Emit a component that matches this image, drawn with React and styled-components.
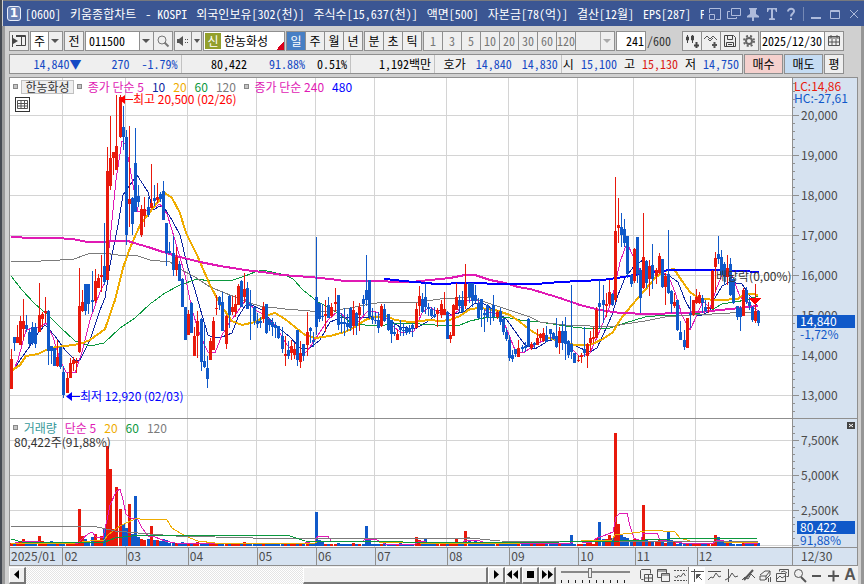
import React from "react";
import styled, { createGlobalStyle, css } from "styled-components";

const MONO = '"Noto Sans Mono CJK KR", "Noto Sans CJK KR", "Liberation Mono", monospace';
const SANS = '"Noto Sans CJK KR", "Liberation Sans", sans-serif';

const C = {
  title: "#3b5693",
  edge: "#8f8f8f",
  panel: "#d0d0d0",
  face: "#efefef",
  axis: "#d6e2f0",
  grid: "#d4d4d4",
  up: "#e8190c",
  down: "#1059c9",
  magenta: "#e01ab4",
  navy: "#0d25a0",
  amber: "#efac00",
  green: "#0b983e",
  gray: "#7b7b7b",
  blue: "#0000ff",
  text: "#4b4b4b",
  quote: "#1449c4",
};

/* x, high, body top, body bottom, low, colour (u = up, d = down) */
const CANDLES = `
11 349 359 389 389 u;14 337 337 343 351 d;17 325 337 343 343 u;20 316 321 345 345 u;23 299 321 329 340 u;26 315 325 329 332 d;29 330 332 344 346 d;32 322 327 343 345 d;35 323 327 344 348 d;39 283 315 332 332 u;42 312 314 319 327 u;45 297 311 313 323 u;48 310 311 351 365 d;51 346 346 351 364 d;54 348 348 366 366 d;57 340 357 366 367 u;60 347 347 367 369 d;63 366 372 395 398 d;67 373 378 393 393 u;70 358 363 378 378 u;73 357 360 364 371 u;76 358 361 363 373 u;79 268 306 352 353 u;82 290 302 311 312 u;85 284 284 311 315 d;88 284 284 304 314 d;92 271 300 302 312 d;95 269 281 301 303 u;98 274 278 288 288 u;101 255 275 277 292 u;104 223 266 282 285 d;107 147 171 280 280 u;110 116 158 186 190 u;113 152 152 158 175 u;116 95 146 170 170 u;120 95 97 137 138 u;123 106 127 137 150 d;126 130 137 235 245 d;129 126 199 204 227 u;132 197 198 224 235 d;135 128 163 212 212 d;138 185 196 202 207 d;141 205 209 235 237 u;144 197 209 216 227 u;148 197 207 215 217 d;151 164 203 208 208 u;154 185 198 201 206 d;157 183 197 200 203 u;160 192 194 199 202 d;163 181 191 220 220 d;166 223 223 253 266 d;169 242 251 253 254 d;173 236 253 270 276 d;176 247 257 270 276 u;179 261 264 281 281 d;182 278 279 307 307 d;185 307 307 340 340 d;188 310 314 335 335 u;191 302 303 333 333 d;194 327 336 356 356 u;197 311 321 336 358 u;201 318 319 362 371 d;204 323 361 367 368 d;207 356 368 379 388 d;210 338 341 360 360 u;213 317 321 350 350 u;216 295 308 309 315 u;219 296 297 305 310 d;222 292 302 331 331 d;226 315 316 344 349 u;229 295 296 315 328 d;232 296 307 312 315 u;235 295 304 312 317 u;238 284 286 305 305 u;241 280 281 307 307 d;244 273 289 297 303 u;247 282 288 309 309 d;250 290 304 306 340 d;254 307 307 321 325 d;257 313 321 324 328 d;260 317 321 323 328 d;263 302 307 319 323 u;266 304 304 333 334 d;269 318 319 325 331 d;272 318 322 327 336 d;275 322 325 328 338 d;278 326 326 338 339 d;282 327 336 349 353 d;285 336 354 356 366 u;288 341 350 356 359 d;291 340 346 353 360 u;294 343 349 355 359 u;297 330 330 360 366 d;300 341 353 362 368 u;303 344 344 356 361 d;307 312 332 345 356 u;310 327 328 331 343 d;313 332 340 342 347 d;316 237 297 327 335 d;319 303 303 319 322 d;322 304 316 317 321 d;325 300 314 316 332 u;328 297 305 318 318 d;331 303 307 316 317 u;335 288 302 304 312 u;338 295 295 325 330 d;341 313 322 324 333 d;344 308 322 324 336 d;347 314 323 327 331 d;350 307 308 328 331 d;353 301 310 326 335 u;356 312 313 326 335 d;359 303 307 315 331 u;363 295 299 304 315 d;366 255 290 300 306 d;369 280 280 317 319 d;372 308 317 320 324 d;375 312 320 321 324 d;378 312 320 328 333 d;381 304 306 326 327 u;384 304 309 321 322 d;388 314 314 330 331 d;391 320 320 334 343 d;394 323 332 334 336 d;397 330 334 340 340 u;400 320 327 330 336 d;403 323 330 331 336 d;406 326 328 333 335 d;409 325 328 332 334 d;412 323 325 329 337 d;416 303 309 328 328 u;419 286 296 306 316 u;422 293 299 312 313 d;425 283 297 307 314 d;428 303 307 309 316 d;431 307 309 316 317 d;434 307 315 317 318 d;437 308 310 314 327 u;441 300 304 315 318 u;444 292 309 315 315 u;447 311 312 339 339 d;450 332 335 339 343 u;453 304 305 336 336 u;456 283 297 310 310 u;459 295 300 306 312 d;462 291 300 312 313 d;465 264 284 306 309 u;469 283 283 297 303 d;472 283 283 301 307 d;475 285 295 301 303 d;478 298 303 318 319 d;481 299 299 310 327 d;484 309 313 315 332 d;487 304 305 317 322 d;490 307 317 318 325 d;493 295 305 317 321 d;497 310 312 317 319 u;500 308 311 322 325 d;503 318 319 332 335 d;506 328 332 339 341 d;509 335 340 358 361 d;512 350 355 359 362 d;515 349 349 354 357 d;518 340 348 357 357 u;522 345 347 349 352 d;525 342 346 348 352 d;528 318 319 346 347 d;531 342 344 348 350 u;534 342 343 345 348 d;537 329 338 345 345 u;540 333 334 338 341 u;543 328 333 341 342 u;546 326 335 342 342 d;550 329 329 334 340 d;553 332 333 339 340 d;556 318 336 347 348 d;559 327 331 343 354 u;562 321 331 343 350 d;565 317 331 344 360 d;568 340 341 355 358 d;571 285 344 352 359 d;574 353 353 363 363 d;578 355 360 361 362 u;581 353 355 357 363 u;584 327 349 353 357 d;587 343 344 356 368 u;590 331 338 343 351 u;593 327 337 339 343 u;596 307 310 338 338 u;599 280 303 307 328 d;603 285 300 305 323 d;606 293 304 306 317 u;609 280 292 304 306 u;612 293 294 305 306 d;615 177 231 300 302 u;618 198 225 228 243 u;621 213 227 235 247 d;624 219 229 243 247 d;627 236 236 274 278 d;631 274 275 284 287 d;634 248 249 281 283 u;637 237 237 274 283 d;640 268 270 298 313 d;643 213 257 288 289 u;646 260 261 283 288 d;649 260 266 279 296 u;652 244 265 279 289 d;656 268 270 276 284 u;659 253 256 273 274 u;662 259 259 287 288 d;665 273 276 287 305 u;668 230 274 293 294 d;671 290 291 304 313 d;674 293 302 306 308 u;677 300 300 330 331 d;680 321 332 340 340 d;684 330 340 347 350 d;687 318 318 348 348 u;690 296 313 315 328 d;693 300 300 315 316 u;696 289 297 303 304 u;699 292 295 303 304 u;702 295 298 303 313 d;705 300 307 311 312 d;708 302 307 309 313 u;712 270 271 309 309 u;715 252 258 267 292 u;718 236 254 259 264 d;721 250 257 275 276 d;724 262 264 277 285 d;727 255 268 277 285 u;730 258 264 295 296 d;733 278 279 303 304 d;737 306 306 317 320 d;740 306 308 317 331 d;743 288 290 316 316 u;746 287 290 302 304 d;749 297 302 306 310 d;752 306 307 320 322 d;755 284 311 321 323 u;758 310 311 323 326 d`
  .trim()
  .split(";")
  .map((row) => {
    const [x, hi, top, bot, lo, dir] = row.trim().split(" ");
    return { x: +x, hi: +hi, top: +top, bot: +bot, lo: +lo, up: dir === "u" };
  });

/* bar heights on the busier days; the quiet ones get a low base value */
const VOLUME = {
  17: 4, 20: 5, 23: 7, 39: 10, 42: 5, 51: 5, 79: 37, 82: 10, 85: 7, 88: 5, 92: 9, 95: 12, 98: 6, 101: 10, 104: 18,
  107: 100, 110: 77, 113: 17, 116: 59, 120: 37, 123: 22, 126: 18, 129: 42, 132: 12, 135: 50, 138: 9, 141: 7, 144: 6,
  148: 7, 151: 20, 154: 6, 157: 6, 160: 5, 163: 7, 166: 6, 169: 3, 173: 4, 176: 3, 182: 4, 197: 4, 244: 4, 307: 5,
  316: 34, 319: 6, 322: 5, 366: 20, 369: 6, 416: 9, 419: 6, 425: 7, 456: 7, 465: 15, 469: 5, 475: 5, 546: 4, 571: 11,
  590: 5, 596: 8, 599: 24, 603: 7, 606: 7, 609: 11, 612: 8, 615: 113, 618: 22, 621: 11, 624: 9, 627: 8, 631: 5, 634: 7,
  637: 6, 640: 6, 643: 41, 646: 7, 649: 4, 652: 5, 656: 4, 659: 6, 662: 5, 668: 15, 671: 6, 674: 4, 715: 11, 718: 9,
  721: 5, 724: 5, 727: 4, 730: 6,
};
const volumeOf = (x, i) => VOLUME[x] || 2 + ((i * 7) % 5 === 0 ? 1 : 0);

const PRICE_MA = [
  { color: C.green, width: 1, pts: "11,276 22,290 35,304 48,315 60,327 75,341 90,346 104,343 120,328 135,318 150,304 165,293 180,285 197,279 210,281 233,280 245,276 255,272 263,270 285,275 293,279 303,290 318,302 330,308 340,315 350,322 365,325 385,325 395,323 420,324 435,325 460,325 470,321 488,317 505,317 520,320 540,322 565,326 590,329 610,328 625,323 645,317 665,315 690,315 710,311 722,304 735,302 746,300 758,296" },
  { color: C.gray, width: 1, pts: "11,261 32,262 50,260 60,260 74,259 88,254 103,253 118,255 135,255 150,260 170,262 180,269 195,277 210,287 230,295 250,303 260,306 285,309 310,311 330,311 350,308 370,304 385,302 420,302 440,299 470,297 485,302 500,307 515,312 530,317 540,322 565,325 590,326 610,327 625,324 645,321 665,317 690,315 712,314 730,313 745,312 758,312" },
  { color: C.amber, width: 2, pts: "11,371 20,365 26,356 38,354 50,348 65,346 80,344 90,340 105,329 115,300 123,268 130,248 140,225 150,212 165,193 172,198 180,213 186,233 197,255 210,285 220,304 232,321 242,325 255,322 268,315 275,313 285,319 295,327 305,335 315,338 330,336 345,332 355,327 365,320 375,317 387,316 395,320 410,322 430,320 440,321 450,320 460,316 470,309 480,308 495,310 510,315 520,322 530,330 540,336 548,338 560,341 575,345 590,345 603,339 613,332 620,320 632,305 645,290 655,278 664,271 674,269 682,281 690,292 700,299 720,300 738,299 745,293 758,295" },
  { color: C.magenta, width: 2, pts: "11,237 33,238 55,238 72,239 88,242 105,242 115,241 128,241 134,243 148,247 163,252 180,257 200,262 220,266 245,270 270,273 282,275 310,277 330,279 345,281 380,281 395,282 412,282 430,280 450,278 465,275 475,275 490,280 505,283 518,287 530,289 540,292 560,298 580,305 600,310 620,313 650,314 680,313 700,312 720,310 740,308 758,306" },
  { color: C.blue, width: 2, pts: "384,279 395,280 403,281 415,282 437,284 466,283 507,284 537,284 548,283 560,282 580,281 603,280 623,277 640,274 660,271 673,270 713,270 740,271 759,272" },
];
const FAST_MA = [
  { color: C.navy, width: 1, pts: "14,370 20,360 30,346 38,333 45,325 55,336 65,350 75,360 80,360 90,340 100,310 105,298 110,265 118,225 123,195 130,185 137,175 148,192 153,210 160,206 165,209 172,220 180,235 188,268 195,290 202,315 208,335 215,338 222,337 232,333 238,317 245,306 252,305 262,310 275,325 290,337 300,348 310,348 320,340 330,322 340,318 355,317 365,318 375,316 388,319 400,327 415,329 430,320 440,310 452,315 465,311 475,303 482,303 495,310 507,320 517,334 525,345 535,349 548,341 560,338 570,343 580,348 590,352 597,348 603,335 612,315 618,295 625,278 635,265 643,260 650,268 660,273 668,275 678,282 685,300 692,313 700,316 710,311 715,298 722,286 730,282 742,284 748,293 758,307" },
  { color: C.magenta, width: 1, pts: "11,376 18,360 26,330 33,328 40,327 46,323 53,337 60,360 66,372 75,373 82,352 90,320 100,292 105,282 110,240 116,180 122,141 126,145 130,168 138,212 150,210 160,204 167,214 175,240 185,275 192,310 200,335 208,352 215,353 222,335 230,322 238,311 246,299 255,310 265,315 275,325 287,345 300,358 308,350 318,335 328,320 338,311 348,320 358,322 368,311 376,312 386,318 395,328 402,333 414,331 422,313 430,307 440,313 450,316 458,311 466,300 477,300 487,312 497,314 505,325 515,350 523,353 535,345 548,338 560,337 572,349 580,357 590,353 598,335 605,318 612,300 620,262 627,243 633,256 640,270 650,270 660,272 668,275 675,292 682,315 690,330 697,315 703,301 710,308 716,290 723,272 732,275 740,297 748,303 758,311" },
];
const VOLUME_MA = [
  { color: C.magenta, pts: "11,544 23,541 40,542 60,543 77,544 81,540 88,534 92,532 96,537 103,538 107,520 110,505 116,492 120,489 123,500 126,514 129,517 133,519 137,518 142,528 148,536 155,537 165,541 175,543 300,544 315,541 318,536 328,536 331,541 362,542 365,539 377,540 385,544 415,544 420,541 432,543 462,543 466,540 478,540 485,543 570,544 574,541 590,543 597,538 603,536 613,532 616,517 620,513 627,513 630,526 634,538 641,541 643,533 657,533 660,540 682,543 712,544 718,540 730,542 758,544" },
  { color: C.amber, pts: "11,543 75,543 90,541 104,540 108,535 120,526 137,518 143,520 152,519 167,520 172,528 185,536 198,541 215,543 315,543 318,541 370,541 378,542 420,543 460,543 520,543 612,540 615,535 640,532 650,530 675,532 680,538 690,541 758,543" },
  { color: C.gray, pts: "11,526 93,526 115,531 150,534 175,536 215,537 290,539 470,538 500,541 620,542 758,541" },
  { color: C.green, pts: "11,539 22,542 105,542 115,538 140,535 265,535 290,536 305,541 500,543 620,541 670,539 758,538" },
];
const MONTHS = [
  ["2025/01", 53], ["02", 63], ["03", 62], ["04", 69], ["05", 59], ["06", 59],
  ["07", 72], ["08", 62], ["09", 69], ["10", 56], ["11", 62], ["12", 96],
];
const MONTH_X = [62, 125, 187, 256, 315, 374, 446, 508, 577, 633, 695];
const TITLE_PARTS = [
  "[0600] ", "키움종합차트 ", "- KOSPI ", "외국인보유[302(천)] ", "주식수[15,637(천)] ",
  "액면[500] ", "자본금[78(억)] ", "결산[12월] ", "EPS[287] ", "PE",
];

const Global = createGlobalStyle`
  *, *::before, *::after { box-sizing: border-box; }
  body { margin: 0; background: ${C.panel}; }
  button, input, select { font: inherit; color: inherit; margin: 0; padding: 0; border-radius: 0; }
`;

const Frame = styled.div`
  min-height: 100vh;
  display: flex;
  flex-direction: column;
  background: ${C.panel};
  border-left: 2px solid #454a52;
  font: 12px/16px ${MONO};
  color: #000;
`;
const TitleBar = styled.header`
  display: flex;
  align-items: center;
  height: 26px;
  margin-left: 1px;
  padding: 0 2px 0 4px;
  border-top: 1px solid #77797e;
  background: ${C.title};
  color: #fff;
`;
const Badge = styled.span`
  width: 14px;
  height: 15px;
  flex: none;
  border: 1px solid #e8edf8;
  border-radius: 3px;
  background: #6c83b6;
  font: bold 12px/13px "DejaVu Sans", sans-serif;
  text-align: center;
`;
const Title = styled.h1`
  flex: 1;
  min-width: 0;
  display: flex;
  gap: 3px;
  height: 18px;
  margin: 0 2px 0 4px;
  font: inherit;
  line-height: 18px;
  white-space: pre;
  overflow: hidden;
`;
const TitleTools = styled.div`
  display: flex;
  align-items: center;
  color: #aebbdc;
  gap: 2px;
`;
const TitleButton = styled.button`
  width: 17px;
  height: 16px;
  display: grid;
  place-items: center;
  border: 0;
  background: none;
`;
const Divider = styled.span`
  width: 1px;
  height: 14px;
  margin: 0 1px 0 2px;
  background: #7589b5;
`;
const Body = styled.main`
  flex: 1;
  display: flex;
  flex-direction: column;
  padding: 5px 3px 0 4px;
  border-left: 3px solid #9a9a9a;
  border-right: 3px solid #969696;
`;
const Toolbar = styled.div`
  display: flex;
  align-items: stretch;
  height: 20px;
  gap: 1px;
  margin-right: 14px;
`;
const Group = styled.div`
  display: flex;
  border: 1px solid ${C.edge};
  background: ${C.face};
  ${(p) => p.$push && css`margin-left: auto;`}
  && > * + * { border-left: 1px solid ${C.edge}; }
`;
const Tool = styled.button`
  box-sizing: content-box;
  width: ${(p) => p.$w || 18}px;
  flex: none;
  display: flex;
  align-items: center;
  justify-content: center;
  border: 0;
  background: ${(p) => (p.$on ? "#477fc4" : C.face)};
  color: ${(p) => (p.$on ? "#fff" : p.$dim ? "#777" : "#000")};
`;
const Select = styled.select`
  width: ${(p) => p.$w}px;
  padding: 0 0 0 3px;
  line-height: 18px;
  appearance: none;
  border: 0;
  background:
    linear-gradient(90deg, transparent calc(100% - 14px), ${C.edge} 0 calc(100% - 13px), ${C.face} 0),
    ${(p) => (p.disabled ? "#eee" : "#fff")};
`;
const SelectWrap = styled.label`
  position: relative;
  display: flex;
  &::after {
    content: "";
    position: absolute;
    right: 3px;
    top: 7px;
    border: 4px solid transparent;
    border-bottom: 0;
    border-top-color: ${(p) => (p.$dim ? "#aaa" : "#555")};
    pointer-events: none;
  }
`;
const Field = styled.input`
  width: ${(p) => p.$w}px;
  border: 0;
  padding: 0 1px;
  outline: 0;
  background: #fff;
  text-align: ${(p) => (p.$right ? "right" : "left")};
`;
const StockName = styled.div`
  width: 80px;
  display: flex;
  align-items: center;
  gap: 3px;
  padding-left: 1px;
  white-space: nowrap;
  background: linear-gradient(135deg, transparent 0 50%, #d9001b 50%) right bottom / 8px 8px no-repeat #fff;
`;
const NewMark = styled.span`
  width: 16px;
  line-height: 16px;
  text-align: center;
  background: #93a02c;
  color: #fff;
`;
const Total = styled.span`
  line-height: 20px;
  color: #333;
`;
const QuoteBar = styled.div`
  display: flex;
  height: 20px;
  gap: 1px;
  margin: 3px 14px 3px 0;
`;
const Quotes = styled.div`
  flex: 1;
  display: flex;
  border: 1px solid ${C.edge};
  background: ${C.face};
`;
const QuoteCell = styled.div`
  flex: ${(p) => p.$w} 1 0;
  min-width: 0;
  display: flex;
  align-items: center;
  justify-content: flex-end;
  gap: ${(p) => p.$gap || 12}px;
  padding-right: 3px;
  white-space: nowrap;
  & + & { border-left: 1px solid #c2c2c2; }
`;
const Num = styled.span`
  margin-right: ${(p) => p.$after || 0}px;
  color: ${(p) => ({ up: "#d9190f", down: C.quote }[p.$tone] || "#000")};
`;
const Order = styled.button`
  width: ${(p) => p.$w}px;
  flex: none;
  border: 1px solid ${C.edge};
  background: ${(p) => p.$bg};
`;
const ChartGrid = styled.section`
  display: grid;
  grid-template-columns: minmax(0, 1fr) 65px;
  grid-template-rows: 341px 129px 17px;
  border: 1px solid ${C.edge};
  background: #fff;
  color: ${C.text};
  font: 12px/14px ${SANS};
`;
const Pane = styled.div`
  position: relative;
  overflow: hidden;
  border-bottom: 1px solid ${C.edge};
`;
const Plot = styled.svg`
  display: block;
  position: absolute;
  inset: 0;
  width: 100%;
  height: 100%;
`;
const Legend = styled.div`
  position: relative;
  display: flex;
  align-items: center;
  height: 17px;
  gap: 8px;
  padding-left: 3px;
  white-space: nowrap;
`;
const Dot = styled.i`
  width: 5px;
  height: 5px;
  flex: none;
  margin-right: -5px;
  background: #c4c4c4;
  border: 1px solid #888;
`;
const NameButton = styled.button`
  height: 14px;
  width: 53px;
  flex: none;
  margin-right: -5px;
  border: 1px solid #c0c0c0;
  background: ${C.face};
  color: #333;
  line-height: 12px;
`;
const Ink = styled.span`
  color: ${(p) => p.$c};
`;
const TableButton = styled.button`
  position: relative;
  display: block;
  width: 15px;
  height: 15px;
  margin: 2px 0 0 5px;
  border: 1px solid #333;
  background: #fff;
  line-height: 0;
`;
const Note = styled.span`
  position: absolute;
  left: ${(p) => (p.$x / 782) * 100}%;
  top: ${(p) => p.$y}px;
  display: flex;
  align-items: center;
  color: ${(p) => p.$c};
  white-space: pre;
`;
const VolumeNow = styled.div`
  position: relative;
  padding-left: 4px;
  line-height: 12px;
  color: #333;
`;
const Axis = styled.div`
  position: relative;
  display: flex;
  flex-direction: column;
  gap: ${(p) => p.$gap}px;
  padding-top: ${(p) => p.$top || 0}px;
  overflow: hidden;
  background: ${C.axis};
  border-left: 1px solid ${C.edge};
  border-bottom: 1px solid ${C.edge};
`;
const AxisLabel = styled.span`
  position: relative;
  padding-left: 8px;
  line-height: 20px;
`;
const Limits = styled.div`
  position: relative;
  height: 27px;
  margin-bottom: -20px;
  padding: 2px 0 0 1px;
  line-height: 12px;
`;
const Limit = styled.div`
  color: ${(p) => p.$c};
`;
const Tag = styled.div`
  position: absolute;
  left: 4px;
  right: 2px;
  top: ${(p) => p.$y}px;
  line-height: 12px;
  color: ${C.down};
`;
const TagNow = styled.div`
  height: 13px;
  padding-left: 3px;
  background: ${C.down};
  color: #fff;
`;
const TagPct = styled.div`
  padding-left: 3px;
`;
const ClosePane = styled.button`
  position: absolute;
  right: 2px;
  top: 3px;
  width: 8px;
  height: 7px;
  border: 0;
  background: #444;
  line-height: 0;
`;
const Dates = styled.div`
  display: flex;
  background: ${C.axis};
`;
const DateCell = styled.span`
  flex: ${(p) => p.$w} 1 0;
  min-width: 0;
  padding-left: 1px;
  line-height: 16px;
  & + & { border-left: 1px solid ${C.edge}; }
`;
const LastDate = styled.span`
  padding-left: 8px;
  line-height: 16px;
  background: ${C.axis};
  border-left: 1px solid ${C.edge};
`;
const Footer = styled.footer`
  display: flex;
  align-items: center;
  height: 18px;
  background: #f0f0f0;
`;
const raised = css`
  border: 1px solid #fff;
  border-right: 2px solid #777;
  border-bottom: 2px solid #777;
  background: ${C.face};
`;
const PushButton = styled.button`
  ${raised}
  width: 17px;
  height: 17px;
  flex: none;
  display: grid;
  place-items: center;
`;
const Track = styled.div`
  flex: 1;
  height: 17px;
  display: flex;
  justify-content: flex-end;
  background: repeating-conic-gradient(#e4e4e4 0 25%, #fff 0 50%) 0 0 / 2px 2px;
`;
const Thumb = styled.div`
  ${raised}
  width: 40%;
`;
const Zoom = styled.input`
  appearance: none;
  width: 69px;
  height: 16px;
  flex: none;
  margin: 0 7px 0 5px;
  background:
    linear-gradient(#888, #888) 0 4px / 100% 2px no-repeat,
    repeating-linear-gradient(90deg, #222 0 1px, transparent 1px 7px) 0 13px / 100% 3px no-repeat;
  &::-webkit-slider-thumb {
    appearance: none;
    width: 4px;
    height: 10px;
    margin-top: -5px;
    border: 1px solid #777;
    background: #eee;
  }
`;
const Drawing = styled.button`
  width: 17px;
  height: 17px;
  flex: none;
  display: grid;
  place-items: center;
  border: 0;
  border-left: 1px solid ${(p) => (p.$on ? "#888" : "transparent")};
  background: ${(p) => (p.$on ? "#fff" : "none")};
  color: #555;
  font: bold 16px/16px "Liberation Sans", sans-serif;
`;

const Icon = ({ w = 14, h = 14, children, ...rest }) => (
  <svg width={w} height={h} viewBox={`0 0 ${w} ${h}`} fill="none" stroke="currentColor" aria-hidden="true" {...rest}>
    {children}
  </svg>
);

const TITLE_ICONS = [
  ["축소", <Icon key="a"><path d="M1.500 6V1.500h11v11H8M1.500 7.500h5v5h-5z" /></Icon>],
  ["창 복제", <Icon key="b"><path d="M4.500 1.500h9v7h-9zM3 4.500H.5v7h9V10" /></Icon>],
  ["고정", <Icon key="c" fill="currentColor" stroke="none"><path d="M3 1h8v1.500h-1V7l3 2v1.500H8V14H6v-3.500H1V9l3-2V2.500H3z" /></Icon>],
  ["글꼴", <Icon key="d" fill="currentColor" stroke="none"><path d="M2 1h10v4h-1L10 2.500H8V11l2 .5V13H4v-1.500l2-.5V2.500H4L3 5H2z" /></Icon>],
  ["도움말", <Icon key="e" strokeWidth="2"><path d="M4 4.500C4 .8 10.500 1 10 4.500 9.800 6.500 7 6.500 7 9.500M7 11v2" /></Icon>],
];
const WINDOW_ICONS = [
  ["최소화", <Icon key="a" strokeWidth="2"><path d="M2 11h10" /></Icon>],
  ["최대화", <Icon key="b"><path d="M2.500 3.500h9v8h-9zM2 4.500h10" /></Icon>],
  ["닫기", <Icon key="c"><path d="M3 3l8 8M11 3l-8 8" /></Icon>],
];
const DRAW_ICONS = [
  ["창 추가", <path key="p" d="M4.500 11.500h-2l-1-1v-8l1-1h9v4M5.500 6.500h8v7h-8zM9.500 7v6M6 10h7" />],
  ["창 겹침", <path key="p" d="M5 9.500H1.500v-8h9V5M1.500 3h9M5.500 5.500h8v8h-8zM5.500 7h8" />],
  ["구간", <g key="p"><path d="M1 2.500h13M1 12.500h13" strokeDasharray="2 1" /><path d="M1.500 8l2 2 2-3 2 2 3-4 2 3" /></g>],
  ["십자선", <g key="p"><path d="M1 3.500h13M4.500 1v13" /><path d="M6.500 6.500h4l-4 4zM8 8l4 4" fill="currentColor" /></g>],
  ["수평선", <path key="p" d="M1 3.500h13M1 12l3-3 2 1 3-5 3 4 2-1" />],
  ["수직선", <path key="p" d="M4.500 1v13M1 12l4-2 3-5 3 4 3-1" />],
  ["추세선", <g key="p"><path d="M3 12L12 2" strokeWidth="2" /><path d="M1 12l3-3 3 2 3-5 4 4" /></g>],
  ["지우개", <path key="p" d="M2 7l5-4h5l-4 5H2v4h5l5-5V3M8 8v4M10.500 10v4M12.500 9v5" />],
  ["차트 겹침", <path key="p" d="M4.500 3.500v-2h9v7h-2M1.500 5.500h9v8h-9zM2 11l3-3 2 2 3-2M6 4l3-1 3 2" />],
  ["확대경", <g key="p"><circle cx="6.500" cy="5.500" r="4" /><path d="M9 9l5 5" strokeWidth="2" /></g>],
  ["축소", <path key="p" d="M3 8h9" strokeWidth="2" />],
  ["확대", <path key="p" d="M2 8h11M7.500 2.500v11" strokeWidth="2" />],
];

const Lines = ({ items }) =>
  items.map((m, i) => (
    <polyline key={i} points={m.pts} fill="none" stroke={m.color} strokeWidth={m.width || 1} />
  ));

function TitleRow() {
  return (
    <TitleBar>
      <Badge>1</Badge>
      <Title>{TITLE_PARTS.map((part) => <span key={part}>{part}</span>)}</Title>
      <TitleTools>
        {TITLE_ICONS.map(([label, icon]) => <TitleButton key={label} aria-label={label}>{icon}</TitleButton>)}
        <Divider />
        {WINDOW_ICONS.map(([label, icon]) => <TitleButton key={label} aria-label={label}>{icon}</TitleButton>)}
      </TitleTools>
    </TitleBar>
  );
}

function Controls() {
  return (
    <Toolbar>
      <Group>
        <Tool aria-label="패널"><Icon stroke="#444"><path d="M4 1.500h9.500v10H4M4 2.500h9M9.500 2v9" /><path d="M1 4l5 3-5 3z" fill="#444" stroke="none" /><path d="M.5 1v12" /></Icon></Tool>
      </Group>
      <Group>
        <SelectWrap><Select $w={31} aria-label="종류" defaultValue="주"><option>주</option></Select></SelectWrap>
      </Group>
      <Group><Tool>전</Tool></Group>
      <Group>
        <SelectWrap><Select $w={67} aria-label="종목 코드" defaultValue="011500"><option>011500</option></Select></SelectWrap>
        <Tool aria-label="검색"><Icon stroke="#777"><circle cx="6" cy="6" r="4" /><path d="M8.500 8.500l4 4" strokeWidth="2" /></Icon></Tool>
      </Group>
      <Group>
        <Tool aria-label="소리" $w={16}><Icon w={14} stroke="none" fill="#555"><path d="M1 5h2l4-3v10L3 9H1z" /><path d="M9 5h1v1H9zM9 8h1v1H9zM11 5h1v1h-1zM11 8h1v1h-1z" /></Icon></Tool>
        <Tool aria-label="소리 메뉴" $w={9}><Icon w={6} h={4} fill="#555" stroke="none"><path d="M0 0h6L3 4z" /></Icon></Tool>
      </Group>
      <Group><StockName><NewMark>신</NewMark>한농화성</StockName></Group>
      <Group>
        <Tool $on>일</Tool><Tool>주</Tool><Tool>월</Tool><Tool>년</Tool>
      </Group>
      <Group>
        <Tool>분</Tool><Tool>초</Tool><Tool>틱</Tool>
      </Group>
      <Group>
        {[1, 3, 5, 10, 20, 30, 60, 120].map((n) => <Tool key={n} $dim>{n}</Tool>)}
        <SelectWrap $dim><Select $w={38} disabled aria-label="분 단위" /></SelectWrap>
      </Group>
      <Group><Field $w={28} $right aria-label="표시 봉 수" defaultValue="241" /></Group>
      <Total>/600</Total>
      <Group $push>
        <Tool aria-label="봉 추가"><Icon stroke="#444" fill="#444"><path d="M2.500 1v8M7.500 1v8M1.500 3h2v3h-2zM6.500 2h2v4h-2z" /><path d="M11.500 8v6M9 11.500h5" strokeWidth="2" /></Icon></Tool>
        <Tool aria-label="지표 추가"><Icon stroke="#555"><path d="M0 5l3-3 3 3 3-3 4 4M4 5l2 2 3-3" /><path d="M10.500 8v6M8 11h5" strokeWidth="2" /></Icon></Tool>
        <Tool aria-label="저장"><Icon stroke="#444"><path d="M1.500 1.500h9l2 2v9h-11zM4.500 2v3.500h5V2M3.500 12V8.500h7V12M5 10.500h4" /></Icon></Tool>
        <Tool aria-label="설정"><Icon stroke="#666"><circle cx="7" cy="7" r="3" strokeWidth="2" /><circle cx="7" cy="7" r="5" strokeWidth="2" strokeDasharray="2 2" /></Icon></Tool>
      </Group>
      <Group>
        <Field $w={63} aria-label="날짜" defaultValue="2025/12/30" />
        <Tool aria-label="달력"><Icon w={12} stroke="#555"><path d="M.5 2.500h11v9H.5zM0 4h12M3 1v3M9 1v3M4 5v6M8 5v6M1 8h10" /></Icon></Tool>
      </Group>
    </Toolbar>
  );
}

function QuoteStrip() {
  return (
    <QuoteBar>
      <Quotes>
        <QuoteCell $w={172}>
          <Num $tone="down" $after={18}>14,840▼</Num>
          <Num $tone="down">270</Num>
          <Num $tone="down">-1.79%</Num>
        </QuoteCell>
        <QuoteCell $w={170}>
          <Num $after={10}>80,422</Num>
          <Num $tone="down">91.88%</Num>
          <Num>0.51%</Num>
        </QuoteCell>
        <QuoteCell $w={82}><Num>1,192백만</Num></QuoteCell>
        <QuoteCell $w={126} $gap={10}>
          <Num>호가</Num><Num $tone="down">14,840</Num><Num $tone="down">14,830</Num>
        </QuoteCell>
        <QuoteCell $w={182} $gap={7}>
          <Num>시</Num><Num $tone="down">15,100</Num>
          <Num>고</Num><Num $tone="up">15,130</Num>
          <Num>저</Num><Num $tone="down">14,750</Num>
        </QuoteCell>
      </Quotes>
      <Order $w={39} $bg="#f5d0cd">매수</Order>
      <Order $w={39} $bg="#c5dcf3">매도</Order>
      <Order $w={20} $bg={C.face}>평</Order>
    </QuoteBar>
  );
}

function PriceChart() {
  return (
    <Pane>
      <Plot viewBox="10 78 782 340" preserveAspectRatio="none" shapeRendering="crispEdges">
        {[115, 155, 195, 235, 275, 315, 355, 395].map((y) => <path key={y} d={`M10 ${y}.5H792`} stroke={C.grid} />)}
        {MONTH_X.map((x) => <path key={x} d={`M${x}.5 78V418`} stroke={C.grid} />)}
        <Lines items={FAST_MA} />
        <Lines items={PRICE_MA} />
        {CANDLES.map((c) => (
          <g key={c.x} fill={c.up ? C.up : C.down}>
            <rect x={c.x} y={c.hi} width="1" height={Math.max(1, c.lo - c.hi)} />
            <rect x={c.x - 1} y={c.top} width="3" height={Math.max(1, c.bot - c.top)} />
          </g>
        ))}
        <path d="M749 298h12l-6 7z" fill="#ff0000" />
      </Plot>
      <Legend>
        <Dot />
        <NameButton>한농화성</NameButton>
        <Dot />
        <Ink $c={C.magenta}>&nbsp;종가 단순 5</Ink>
        <Ink $c={C.navy}>10</Ink>
        <Ink $c={C.amber}>20</Ink>
        <Ink $c={C.green}>60</Ink>
        <Ink $c={C.gray}>120</Ink>
        <Dot />
        <Ink $c={C.magenta}>&nbsp;종가 단순 240</Ink>
        <Ink $c={C.blue}>480</Ink>
      </Legend>
      <TableButton aria-label="표 보기">
        <Icon w={13} h={13} stroke="#555"><path d="M1.500 2.500h10v8h-10zM1 5.500h11M1 8h11M5 2v9M8.500 2v9" /></Icon>
      </TableButton>
      <Note $x={109} $y={14} $c="#ff0000">
        <Icon w={14} h={9} stroke="none" fill="currentColor"><path d="M0 4.500L6 0v4h8v1H6v4z" /></Icon>최고 20,500 (02/26)
      </Note>
      <Note $x={56} $y={311} $c="#0000ff">
        <Icon w={14} h={9} stroke="none" fill="currentColor"><path d="M0 4.500L6 0v4h8v1H6v4z" /></Icon>최저 12,920 (02/03)
      </Note>
      <Note $x={706} $y={191} $c="#333">배당락(0,00%)</Note>
    </Pane>
  );
}

function PriceAxis() {
  const ticks = [];
  for (let y = 83; y < 418; y += 8) ticks.push(`M0 ${y - 78}.5H${(y - 115) % 40 === 0 ? 6 : 2}`);
  return (
    <Axis $gap={20}>
      <Plot shapeRendering="crispEdges"><path d={ticks.join("")} stroke={C.edge} /></Plot>
      <Limits>
        <Limit $c={C.up}>LC:14,86</Limit>
        <Limit $c={C.down}>HC:-27,61</Limit>
      </Limits>
      {["20,000", "19,000", "18,000", "17,000", "16,000", "15,000", "14,000", "13,000"].map((t) => (
        <AxisLabel key={t}>{t}</AxisLabel>
      ))}
      <Tag $y={237}>
        <TagNow>14,840</TagNow>
        <TagPct>-1,72%</TagPct>
      </Tag>
    </Axis>
  );
}

function VolumeChart() {
  return (
    <Pane>
      <Plot viewBox="10 419 782 128" preserveAspectRatio="none" shapeRendering="crispEdges">
        {[440, 475, 510, 545].map((y) => <path key={y} d={`M10 ${y}.5H792`} stroke={C.grid} />)}
        {MONTH_X.map((x) => <path key={x} d={`M${x}.5 419V547`} stroke={C.grid} />)}
        {CANDLES.map((c, i) => {
          const h = volumeOf(c.x, i);
          return <rect key={c.x} x={c.x - 1} y={546 - h} width="3" height={h} fill={c.up ? C.up : C.down} />;
        })}
        <Lines items={VOLUME_MA} />
      </Plot>
      <Legend>
        <Dot />
        <Ink $c="#38999a">&nbsp;거래량</Ink>
        <Ink $c={C.magenta}>단순 5</Ink>
        <Ink $c={C.amber}>20</Ink>
        <Ink $c={C.green}>60</Ink>
        <Ink $c={C.gray}>120</Ink>
      </Legend>
      <VolumeNow>80,422주(91,88%)</VolumeNow>
    </Pane>
  );
}

function VolumeAxis() {
  const ticks = [];
  for (let y = 426; y < 546; y += 7) ticks.push(`M0 ${y - 419}.5H${(y - 440) % 35 === 0 ? 6 : 2}`);
  return (
    <Axis $gap={15} $top={11}>
      <Plot shapeRendering="crispEdges"><path d={ticks.join("")} stroke={C.edge} /></Plot>
      <AxisLabel>7,500K</AxisLabel>
      <AxisLabel>5,000K</AxisLabel>
      <AxisLabel>2,500K</AxisLabel>
      <Tag $y={102}>
        <TagNow>80,422</TagNow>
        <TagPct>91,88%</TagPct>
      </Tag>
      <ClosePane aria-label="닫기"><Icon w={8} h={7} stroke="#fff"><path d="M2 2l4 3M6 2L2 5" /></Icon></ClosePane>
    </Axis>
  );
}

function BottomBar() {
  const glyph = (d) => <Icon w={12} h={9} fill="#000" stroke="none"><path d={d} /></Icon>;
  return (
    <Footer>
      <PushButton aria-label="왼쪽">{glyph("M8 0v9L3 4.500z")}</PushButton>
      <Track><Thumb /></Track>
      <PushButton aria-label="오른쪽">{glyph("M4 0v9l5-4.500z")}</PushButton>
      <PushButton aria-label="뒤로">{glyph("M5 0v9L0 4.500zM11 0v9L6 4.500z")}</PushButton>
      <PushButton aria-label="정지">{glyph("M3 1h7v7H3z")}</PushButton>
      <PushButton aria-label="앞으로">{glyph("M1 0v9l5-4.500zM7 0v9l5-4.500z")}</PushButton>
      <Zoom type="range" min="0" max="100" defaultValue="42" aria-label="확대 비율" />
      {DRAW_ICONS.map(([label, path], i) => (
        <Drawing key={label} aria-label={label} $on={i === 3}><Icon w={15} h={15}>{path}</Icon></Drawing>
      ))}
      <Drawing>A</Drawing>
    </Footer>
  );
}

export default function App() {
  return (
    <Frame>
      <Global />
      <TitleRow />
      <Body>
        <Controls />
        <QuoteStrip />
        <ChartGrid>
          <PriceChart />
          <PriceAxis />
          <VolumeChart />
          <VolumeAxis />
          <Dates>{MONTHS.map(([m, w]) => <DateCell key={m} $w={w}>{m}</DateCell>)}</Dates>
          <LastDate>12/30</LastDate>
        </ChartGrid>
        <BottomBar />
      </Body>
    </Frame>
  );
}
